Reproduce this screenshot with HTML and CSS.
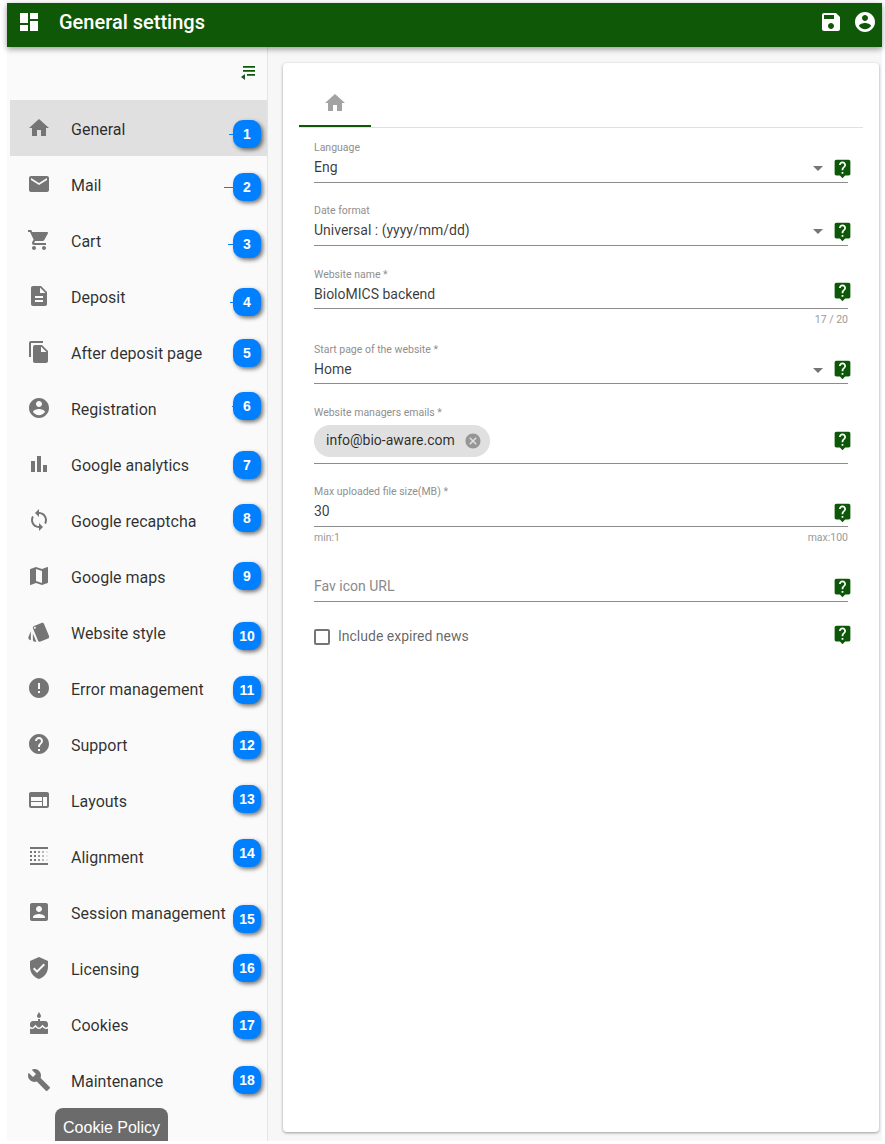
FILE: index.html
```html
<!DOCTYPE html>
<html lang="en">
<head>
<meta charset="utf-8">
<title>General settings</title>
<link rel="stylesheet" href="styles.css">
</head>
<body>
<svg class="sprite" aria-hidden="true">
  <symbol id="help" viewBox="0 0 24 24"><path d="M19 2H5c-1.11 0-2 .9-2 2v14c0 1.1.89 2 2 2h4l3 3 3-3h4c1.1 0 2-.9 2-2V4c0-1.1-.9-2-2-2zm-6 16h-2v-2h2v2zm2.07-7.75l-.9.92C13.45 11.9 13 12.5 13 14h-2v-.5c0-1.1.45-2.1 1.17-2.83l1.24-1.26c.37-.36.59-.86.59-1.41 0-1.1-.9-2-2-2s-2 .9-2 2H8c0-2.21 1.79-4 4-4s4 1.79 4 4c0 .88-.36 1.68-.93 2.25z"/></symbol>
  <symbol id="home" viewBox="0 0 24 24"><path d="M10 20v-6h4v6h5v-8h3L12 3 2 12h3v8z"/></symbol>
</svg>
<div class="frame">
  <header class="appbar">
    <svg class="icon appbar-logo" viewBox="0 0 24 24"><path d="M3 13h8V3H3v10zm0 8h8v-6H3v6zm10 0h8V11h-8v10zm0-18v6h8V3h-8z"/></svg>
    <h1 class="appbar-title">General settings</h1>
    <svg class="icon appbar-save" viewBox="0 0 24 24"><path d="M17 3H5c-1.11 0-2 .9-2 2v14c0 1.1.89 2 2 2h14c1.1 0 2-.9 2-2V7l-4-4zm-5 16c-1.66 0-3-1.34-3-3s1.34-3 3-3 3 1.34 3 3-1.34 3-3 3zm3-10H5V5h10v4z"/></svg>
    <svg class="icon appbar-user" viewBox="0 0 24 24"><path d="M12 2C6.48 2 2 6.48 2 12s4.48 10 10 10 10-4.48 10-10S17.52 2 12 2zm0 3c1.66 0 3 1.34 3 3s-1.34 3-3 3-3-1.34-3-3 1.34-3 3-3zm0 14.2c-2.5 0-4.71-1.28-6-3.22.03-1.99 4-3.08 6-3.08 1.99 0 5.97 1.09 6 3.08-1.29 1.94-3.5 3.22-6 3.22z"/></svg>
  </header>
  <div class="body">
    <aside class="sidebar">
      <div class="collapse-row">
        <svg class="collapse-icon" viewBox="0 0 18 18"><path class="collapse-lines" d="M5 4h12v1.8H5zM5 8h12v1.8H5zM9 12h8v1.8H9z"/><path d="M7 12v6l-4-3z"/></svg>
      </div>
      <ul class="nav">
        <li class="nav-item selected">
          <svg class="icon nav-icon" viewBox="0 0 24 24"><use href="#home"/></svg><span>General</span>
          <b class="badge" style="top:20px">1<i class="tick" style="width:4px"></i></b>
        </li>
        <li class="nav-item">
          <svg class="icon nav-icon" viewBox="0 0 24 24"><path d="M20 4H4c-1.1 0-1.99.9-1.99 2L2 18c0 1.1.9 2 2 2h16c1.1 0 2-.9 2-2V6c0-1.1-.9-2-2-2zm0 4l-8 5-8-5V6l8 5 8-5v2z"/></svg><span>Mail</span>
          <b class="badge" style="top:17px">2<i class="tick" style="width:9px"></i></b>
        </li>
        <li class="nav-item">
          <svg class="icon nav-icon" viewBox="0 0 24 24"><path d="M7 18c-1.1 0-1.99.9-1.99 2S5.9 22 7 22s2-.9 2-2-.9-2-2-2zM1 2v2h2l3.6 7.59-1.35 2.45c-.16.28-.25.61-.25.96 0 1.1.9 2 2 2h12v-2H7.42c-.14 0-.25-.11-.25-.25l.03-.12.9-1.63h7.45c.75 0 1.41-.41 1.75-1.03l3.58-6.49c.08-.14.12-.31.12-.48 0-.55-.45-1-1-1H5.21l-.94-2H1zm16 16c-1.1 0-1.99.9-1.99 2s.89 2 1.99 2 2-.9 2-2-.9-2-2-2z"/></svg><span>Cart</span>
          <b class="badge" style="top:18px">3<i class="tick" style="width:5px"></i></b>
        </li>
        <li class="nav-item">
          <svg class="icon nav-icon" viewBox="0 0 24 24"><path d="M14 2H6c-1.1 0-1.99.9-1.99 2L4 20c0 1.1.89 2 1.99 2H18c1.1 0 2-.9 2-2V8l-6-6zm2 16H8v-2h8v2zm0-4H8v-2h8v2zm-3-5V3.5L18.5 9H13z"/></svg><span>Deposit</span>
          <b class="badge" style="top:20px">4<i class="tick" style="width:3px"></i></b>
        </li>
        <li class="nav-item">
          <svg class="icon nav-icon" viewBox="0 0 24 24"><path d="M16 1H4c-1.1 0-2 .9-2 2v14h2V3h12V1zm-1 4l6 6v10c0 1.1-.9 2-2 2H7.99C6.89 23 6 22.1 6 21l.01-14c0-1.1.89-2 1.99-2h7zm-1 7h5.5L14 6.5V12z"/></svg><span>After deposit page</span>
          <b class="badge" style="top:15px">5</b>
        </li>
        <li class="nav-item">
          <svg class="icon nav-icon" viewBox="0 0 24 24"><path d="M12 2C6.48 2 2 6.48 2 12s4.48 10 10 10 10-4.48 10-10S17.52 2 12 2zm0 3c1.66 0 3 1.34 3 3s-1.34 3-3 3-3-1.34-3-3 1.34-3 3-3zm0 14.2c-2.5 0-4.71-1.28-6-3.22.03-1.99 4-3.08 6-3.08 1.99 0 5.97 1.09 6 3.08-1.29 1.94-3.5 3.22-6 3.22z"/></svg><span>Registration</span>
          <b class="badge" style="top:12px">6<i class="tick" style="width:1px"></i></b>
        </li>
        <li class="nav-item">
          <svg class="icon nav-icon" viewBox="0 0 24 24"><path d="M4 9h4v11H4zM16 13h4v7h-4zM10 4h4v16h-4z"/></svg><span>Google analytics</span>
          <b class="badge" style="top:15px">7</b>
        </li>
        <li class="nav-item">
          <svg class="icon nav-icon" viewBox="0 0 24 24"><path d="M12 4V1L8 5l4 4V6c3.31 0 6 2.69 6 6 0 1.01-.25 1.97-.7 2.8l1.46 1.46C19.54 15.03 20 13.57 20 12c0-4.42-3.58-8-8-8zm0 14c-3.31 0-6-2.69-6-6 0-1.01.25-1.97.7-2.8L5.24 7.74C4.46 8.97 4 10.43 4 12c0 4.42 3.58 8 8 8v3l4-4-4-4v3z"/></svg><span>Google recaptcha</span>
          <b class="badge" style="top:12px">8</b>
        </li>
        <li class="nav-item">
          <svg class="icon nav-icon" viewBox="0 0 24 24"><path d="M20.5 3l-.16.03L15 5.1 9 3 3.36 4.9c-.21.07-.36.25-.36.48V20.5c0 .28.22.5.5.5l.16-.03L9 18.9l6 2.1 5.64-1.9c.21-.07.36-.25.36-.48V3.5c0-.28-.22-.5-.5-.5zM15 19l-6-2.11V5l6 2.11V19z"/></svg><span>Google maps</span>
          <b class="badge" style="top:14px">9</b>
        </li>
        <li class="nav-item">
          <svg class="icon nav-icon" viewBox="0 0 24 24"><path d="M2.53 19.65l1.34.56v-9.03l-2.43 5.86c-.41 1.02.08 2.19 1.09 2.61zm19.5-3.7L17.07 3.98c-.31-.75-1.04-1.21-1.81-1.23-.26 0-.53.04-.79.15L7.1 5.95c-.75.31-1.21 1.03-1.23 1.8-.01.27.04.54.15.8l4.96 11.97c.31.76 1.05 1.22 1.83 1.23.26 0 .52-.05.77-.15l7.36-3.05c1.02-.42 1.51-1.59 1.09-2.6zM7.88 8.75c-.55 0-1-.45-1-1s.45-1 1-1 1 .45 1 1-.45 1-1 1zm-2 11c0 1.1.9 2 2 2h1.45l-3.45-8.34v6.34z"/></svg><span>Website style</span>
          <b class="badge" style="top:18px">10</b>
        </li>
        <li class="nav-item">
          <svg class="icon nav-icon" viewBox="0 0 24 24"><path d="M12 2C6.48 2 2 6.48 2 12s4.48 10 10 10 10-4.48 10-10S17.52 2 12 2zm1 15h-2v-2h2v2zm0-4h-2V7h2v6z"/></svg><span>Error management</span>
          <b class="badge" style="top:16px">11</b>
        </li>
        <li class="nav-item">
          <svg class="icon nav-icon" viewBox="0 0 24 24"><path d="M12 2C6.48 2 2 6.48 2 12s4.48 10 10 10 10-4.48 10-10S17.52 2 12 2zm1 17h-2v-2h2v2zm2.07-7.75l-.9.92C13.45 12.9 13 13.5 13 15h-2v-.5c0-1.1.45-2.1 1.17-2.83l1.24-1.26c.37-.36.59-.86.59-1.41 0-1.1-.9-2-2-2s-2 .9-2 2H8c0-2.21 1.79-4 4-4s4 1.79 4 4c0 .88-.36 1.68-.93 2.25z"/></svg><span>Support</span>
          <b class="badge" style="top:15px">12</b>
        </li>
        <li class="nav-item">
          <svg class="icon nav-icon" viewBox="0 0 24 24"><path d="M20 4H4c-1.1 0-1.99.9-1.99 2L2 18c0 1.1.9 2 2 2h16c1.1 0 2-.9 2-2V6c0-1.1-.9-2-2-2zm-5 14H4v-4h11v4zm0-5H4V9h11v4zm5 5h-4V9h4v9z"/></svg><span>Layouts</span>
          <b class="badge" style="top:13px">13</b>
        </li>
        <li class="nav-item">
          <svg class="icon nav-icon" viewBox="0 0 24 24">
            <path d="M3 3h18v2H3zM3 19h18v2H3z"/>
            <path d="M3 7h2v2H3zM7 7h2v2H7zM3 11h2v2H3zM7 11h2v2H7zM3 15h2v2H3zM7 15h2v2H7z"/>
            <path class="fade-a" d="M11 7h2v2h-2zM11 11h2v2h-2zM11 15h2v2h-2z"/>
            <path class="fade-b" d="M15 7h2v2h-2zM15 11h2v2h-2zM15 15h2v2h-2z"/>
            <path class="fade-c" d="M19 7h2v2h-2zM19 11h2v2h-2zM19 15h2v2h-2z"/>
          </svg><span>Alignment</span>
          <b class="badge" style="top:11px">14</b>
        </li>
        <li class="nav-item">
          <svg class="icon nav-icon" viewBox="0 0 24 24"><path d="M3 5v14c0 1.1.89 2 2 2h14c1.1 0 2-.9 2-2V5c0-1.1-.9-2-2-2H5c-1.11 0-2 .9-2 2zm12 4c0 1.66-1.34 3-3 3s-3-1.34-3-3 1.34-3 3-3 3 1.34 3 3zm-9 8c0-2 4-3.1 6-3.1s6 1.1 6 3.1v1H6v-1z"/></svg><span>Session management</span>
          <b class="badge" style="top:21px">15</b>
        </li>
        <li class="nav-item">
          <svg class="icon nav-icon" viewBox="0 0 24 24"><path d="M12 1L3 5v6c0 5.55 3.84 10.74 9 12 5.16-1.26 9-6.45 9-12V5l-9-4zm-2 16l-4-4 1.41-1.41L10 14.17l6.59-6.59L18 9l-8 8z"/></svg><span>Licensing</span>
          <b class="badge" style="top:14px">16</b>
        </li>
        <li class="nav-item">
          <svg class="icon nav-icon" viewBox="0 0 24 24"><path d="M12 6c1.11 0 2-.9 2-2 0-.38-.1-.73-.29-1.03L12 0l-1.71 2.97c-.19.3-.29.65-.29 1.03 0 1.1.9 2 2 2zm4.6 9.99l-1.07-1.07-1.08 1.07c-1.3 1.3-3.58 1.31-4.89 0l-1.07-1.07-1.09 1.07C6.75 16.64 5.88 17 4.96 17c-.73 0-1.4-.23-1.96-.61V21c0 .55.45 1 1 1h16c.55 0 1-.45 1-1v-4.61c-.56.38-1.23.61-1.96.61-.92 0-1.79-.36-2.44-1.01zM18 9h-5V7h-2v2H6c-1.66 0-3 1.34-3 3v1.54c0 1.08.88 1.96 1.96 1.96.52 0 1.02-.2 1.38-.57l2.14-2.13 2.13 2.13c.74.74 2.03.74 2.77 0l2.14-2.13 2.13 2.13c.37.37.86.57 1.38.57 1.08 0 1.96-.88 1.96-1.96V12C21 10.34 19.66 9 18 9z"/></svg><span>Cookies</span>
          <b class="badge" style="top:15px">17</b>
        </li>
        <li class="nav-item">
          <svg class="icon nav-icon" viewBox="0 0 24 24"><path d="M22.7 19l-9.1-9.1c.9-2.3.4-5-1.5-6.9-2-2-5-2.4-7.4-1.3L9 6 6 9 1.6 4.7C.4 7.1.9 10.1 2.9 12.1c1.9 1.9 4.6 2.4 6.9 1.5l9.1 9.1c.4.4 1 .4 1.4 0l2.3-2.3c.5-.4.5-1.1.1-1.4z"/></svg><span>Maintenance</span>
          <b class="badge" style="top:14px">18</b>
        </li>
      </ul>
      <div class="cookie-policy">Cookie Policy</div>
    </aside>
    <main class="main">
      <section class="card">
        <div class="tabs">
          <div class="tab"><svg class="icon tab-icon" viewBox="0 0 24 24"><use href="#home"/></svg></div>
        </div>
        <form class="form">
          <div class="field">
            <label class="field-label">Language</label>
            <div class="field-row">
              <span class="field-value">Eng</span><span class="caret"></span>
              <svg class="help help-select" viewBox="0 0 24 24"><use href="#help"/></svg>
            </div>
          </div>
          <div class="field gap-wide">
            <label class="field-label">Date format</label>
            <div class="field-row">
              <span class="field-value">Universal : (yyyy/mm/dd)</span><span class="caret"></span>
              <svg class="help help-select" viewBox="0 0 24 24"><use href="#help"/></svg>
            </div>
          </div>
          <div class="field gap-helper">
            <label class="field-label">Website name *</label>
            <div class="field-row row-short">
              <span class="field-value">BioloMICS backend</span>
              <svg class="help help-text" viewBox="0 0 24 24"><use href="#help"/></svg>
            </div>
            <div class="helper"><span></span><span>17 / 20</span></div>
          </div>
          <div class="field gap-wide">
            <label class="field-label">Start page of the website *</label>
            <div class="field-row row-short">
              <span class="field-value">Home</span><span class="caret"></span>
              <svg class="help help-flat" viewBox="0 0 24 24"><use href="#help"/></svg>
            </div>
          </div>
          <div class="field">
            <label class="field-label">Website managers emails *</label>
            <div class="field-row chip-row">
              <span class="field-value">
                <span class="chip"><span class="chip-text">info@bio-aware.com</span><svg class="chip-delete" viewBox="0 0 24 24"><path d="M12 2C6.47 2 2 6.47 2 12s4.47 10 10 10 10-4.47 10-10S17.53 2 12 2zm5 13.59L15.59 17 12 13.41 8.41 17 7 15.59 10.59 12 7 8.41 8.41 7 12 10.59 15.59 7 17 8.41 13.41 12 17 15.59z"/></svg></span>
              </span>
              <svg class="help" viewBox="0 0 24 24"><use href="#help"/></svg>
            </div>
          </div>
          <div class="field gap-narrow">
            <label class="field-label">Max uploaded file size(MB) *</label>
            <div class="field-row">
              <span class="field-value">30</span>
              <svg class="help help-select" viewBox="0 0 24 24"><use href="#help"/></svg>
            </div>
            <div class="helper"><span>min:1</span><span>max:100</span></div>
          </div>
          <div class="field">
            <label class="field-label"></label>
            <div class="field-row">
              <span class="field-value placeholder">Fav icon URL</span>
              <svg class="help help-select" viewBox="0 0 24 24"><use href="#help"/></svg>
            </div>
          </div>
          <div class="check-row">
            <span class="checkbox"></span>
            <span class="check-label">Include expired news</span>
            <svg class="help help-check" viewBox="0 0 24 24"><use href="#help"/></svg>
          </div>
        </form>
      </section>
    </main>
  </div>
</div>
</body>
</html>
```
FILE: styles.css
```css
* { box-sizing: border-box; }
html, body { margin: 0; height: 100%; background: #fff; }
body { font-family: Roboto, "Liberation Sans", sans-serif; overflow: hidden; }
.sprite { position: absolute; width: 0; height: 0; }
.frame { height: 1144px; padding: 3px 3px 3px 7px; display: flex; flex-direction: column; }

.icon { width: 24px; height: 24px; fill: #757575; flex: none; display: block; }

.appbar { height: 44px; background: #0f5807; display: flex; align-items: center; padding: 0 5px 6px 10px; color: #fff; box-shadow: 0 2px 6px rgba(0,0,0,.4); position: relative; z-index: 2; flex: none; }
.appbar .icon { fill: #fff; }
.appbar-title { margin: 0 0 0 18px; font-size: 20px; font-weight: 500; line-height: 24px; flex: 1; }
.appbar-user { margin-left: 10px; }

.body { flex: 1; display: flex; min-height: 0; background: #f7f7f7; }

.sidebar { width: 261px; flex: none; background: #fafafa; border-right: 1px solid #e4e4e4; position: relative; overflow: hidden; }
.collapse-row { height: 53px; display: flex; justify-content: flex-end; padding: 15px 11px 0 0; }
.collapse-icon { width: 18px; height: 18px; fill: #24552a; display: block; }
.collapse-lines { fill: #0f5807; }

.nav { list-style: none; margin: 0 0 0 3px; padding: 0; }
.nav-item { height: 56px; display: flex; align-items: center; padding-left: 17px; position: relative; font-size: 16px; color: rgba(0,0,0,.82); }
.nav-item span { margin-left: 20px; line-height: 20px; padding-top: 4px; white-space: nowrap; }
.nav-item.selected { background: #e0e0e0; }
.fade-a { opacity: .75; }
.fade-b { opacity: .5; }
.fade-c { opacity: .15; }

.badge { position: absolute; left: 223px; width: 28px; height: 28px; border-radius: 10px; background: #0080ff; color: #fff; font: bold 14px/28px "Liberation Sans", sans-serif; text-align: center; box-shadow: 2px 2px 4px rgba(0,0,0,.55); }
.tick { position: absolute; right: 100%; top: 14px; height: 1px; background: #0080ff; }

.cookie-policy { position: absolute; left: 48px; bottom: -6px; width: 113px; height: 39px; background: #6b6b6b; border-radius: 8px 8px 0 0; color: #fff; font: 16px/40px "Liberation Sans", sans-serif; text-align: center; }

.main { flex: 1; min-width: 0; padding: 16px 3px 9px 15px; }
.card { height: 100%; background: #fff; border-radius: 4px; box-shadow: 0 1px 3px rgba(0,0,0,.38); padding: 16px; }

.tabs { border-bottom: 1px solid #e0e0e0; height: 49px; }
.tab { width: 72px; height: 48px; border-bottom: 2px solid #0f5807; display: flex; align-items: center; justify-content: center; padding-top: 2px; }
.tab-icon { fill: #a3a3a3; }

.form { padding: 12px 15px 0; }
.field { margin-bottom: 20px; }
.gap-wide { margin-bottom: 21px; }
.gap-helper { margin-bottom: 15px; }
.gap-narrow { margin-bottom: 14px; }
.field-label { display: block; height: 14px; font-size: 10.5px; line-height: 16px; color: #8f8f8f; margin-bottom: 3px; }
.field-row { display: flex; align-items: flex-start; border-bottom: 1px solid #8c8c8c; height: 26px; }
.row-short { height: 25px; }
.field-value { flex: 1; font-size: 14px; line-height: 20px; color: rgba(0,0,0,.78); min-width: 0; }
.placeholder { color: #8a8a8a; }
.caret { width: 0; height: 0; border-left: 5px solid transparent; border-right: 5px solid transparent; border-top: 5px solid #757575; margin: 9px 9px 0 0; flex: none; }
.help { width: 21px; height: 21px; fill: #0c5708; flex: none; margin-right: -5px; display: block; }
.help-select { margin-top: 1px; }
.help-flat { margin-top: 0; }
.help-text { margin-top: -3px; }
.chip-row { height: 42px; padding-top: 3px; }
.chip-row .help { margin-top: 5px; }
.chip { display: inline-flex; align-items: center; height: 32px; border-radius: 16px; background: #e0e0e0; padding: 0 8px 0 12px; font-size: 14px; color: rgba(0,0,0,.82); white-space: nowrap; }
.chip-text { padding-bottom: 2px; }
.chip-delete { width: 18px; height: 18px; fill: #969696; margin-left: 9px; }
.helper { display: flex; justify-content: space-between; height: 14px; margin-top: 4px; font-size: 10.5px; line-height: 14px; color: #9a9a9a; }

.check-row { display: flex; align-items: center; height: 20px; margin-top: 24px; }
.checkbox { width: 16px; height: 16px; border: 2px solid #757575; border-radius: 2px; margin-top: 2px; flex: none; }
.check-label { flex: 1; margin-left: 8px; font-size: 14px; line-height: 20px; color: rgba(0,0,0,.62); }
.help-check { margin-top: -3px; }
```
